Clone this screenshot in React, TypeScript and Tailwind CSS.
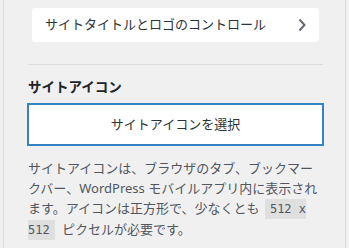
export default function App() {
  return (
    <div className="h-[248px] w-[349px] overflow-hidden bg-[#f0f0f1] px-[3px] font-['Noto_Sans','Noto_Sans_CJK_JP',sans-serif]">
      <div className="h-full border-x border-[#dcdcde] pt-[8px]">
        <button
          type="button"
          className="ml-[28px] flex h-[34px] w-[287px] items-center justify-between rounded-[3px] bg-white pl-[13px] pr-[13px] text-[13px] text-[#2c3338]"
        >
          <span>サイトタイトルとロゴのコントロール</span>
          <svg width="8" height="14" viewBox="0 0 8 14" fill="none">
            <path d="M1.5 1.5L6.5 7L1.5 12.5" stroke="#646970" strokeWidth="2" />
          </svg>
        </button>

        <div className="ml-[24px] mt-[22px] h-px w-[295px] bg-[#dcdcde]" />

        <h3 className="ml-[24px] mt-[12px] text-[13.5px] font-semibold leading-[20px] text-[#1d2327]">
          サイトアイコン
        </h3>

        <button
          type="button"
          className="ml-[23px] mt-[6px] flex h-[43px] w-[297px] items-center justify-center border-2 border-[#3582c4] bg-white text-[13px] text-[#2c3338]"
        >
          サイトアイコンを選択
        </button>

        <p className="ml-[24px] mt-[12px] w-[294px] text-[13px] leading-[20px] text-[#50575e]">
          サイトアイコンは、ブラウザのタブ、ブックマークバー、WordPress モバイルアプリ内に表示されます。アイコンは正方形で、少なくとも{' '}
          <code className="ml-[2px] mr-[4px] bg-black/[0.07] px-[5px] py-[3px] font-['DejaVu_Sans_Mono',monospace] text-[12px] leading-[20px]">
            512 x 512
          </code>{' '}
          ピクセルが必要です。
        </p>
      </div>
    </div>
  )
}
